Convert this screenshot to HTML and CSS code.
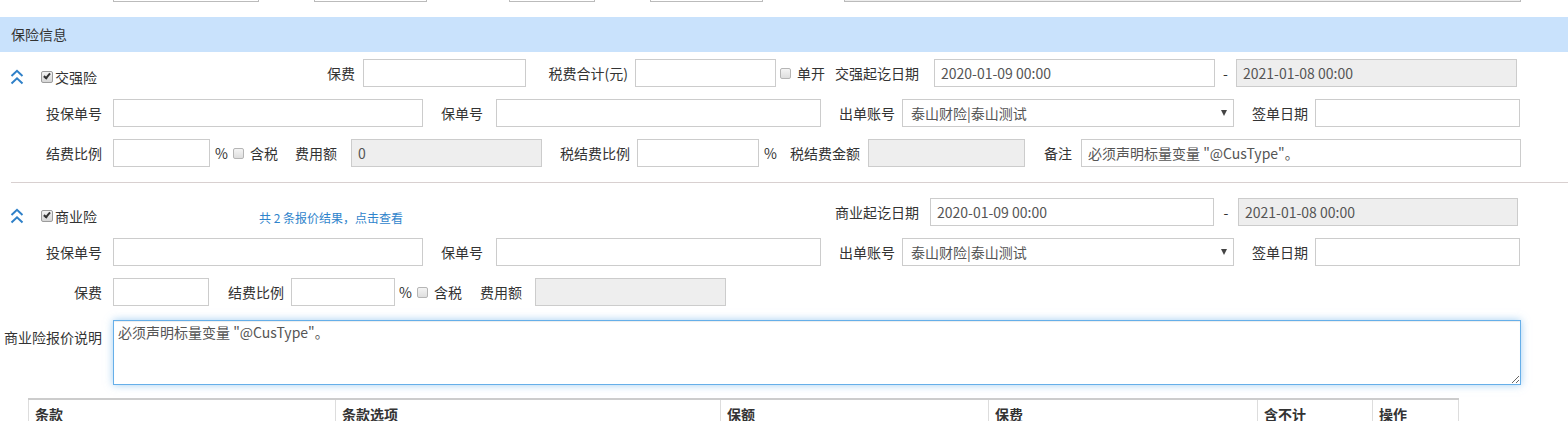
FILE: index.html
```html
<!DOCTYPE html>
<html lang="zh-CN">
<head>
<meta charset="UTF-8">
<meta name="viewport" content="width=device-width, initial-scale=1.0">
<title>保险信息</title>
<link rel="stylesheet" href="styles.css">
</head>
<body>
    <!-- tail of the block above -->
    <div class="prev_row">
        <input type="text" class="prev_a">
        <input type="text" class="prev_b">
        <input type="text" class="prev_c">
        <input type="text" class="prev_d">
        <input type="text" class="prev_e" disabled>
    </div>

    <div class="panel_title">保险信息</div>

    <div class="ins_block">
        <!-- 交强险 -->
        <div class="form_row">
            <div class="ins_head w300">
                <svg class="fold" width="14" height="16" viewBox="0 0 14 16"><polyline points="1.5,7 7,1.8 12.5,7" /><polyline points="1.5,14.5 7,9.3 12.5,14.5" /></svg>
                <label class="chk"><input type="checkbox" checked>交强险</label>
            </div>
            <label class="lbl w63 pr8">保费</label>
            <input type="text" class="txt w163">
            <label class="lbl w109 pr7">税费合计(元)</label>
            <input type="text" class="txt w141">
            <span class="unit_group w59 pl4"><label class="chk light"><input type="checkbox">单开</label></span>
            <label class="lbl w99 pr16">交强起讫日期</label>
            <input type="text" class="txt w281" value="2020-01-09 00:00">
            <span class="dash w21">-</span>
            <input type="text" class="txt w281" value="2021-01-08 00:00" disabled>
        </div>
        <div class="form_row">
            <label class="lbl w113 pr11">投保单号</label>
            <input type="text" class="txt w310">
            <label class="lbl w73 pr13">保单号</label>
            <input type="text" class="txt w325">
            <label class="lbl w81 pr7">出单账号</label>
            <span class="sel w332"><select><option>泰山财险|泰山测试</option></select></span>
            <label class="lbl w81 pr7">签单日期</label>
            <input type="text" class="txt w205">
        </div>
        <div class="form_row">
            <label class="lbl w113 pr11">结费比例</label>
            <input type="text" class="txt w97">
            <span class="unit_group w66 pl5">%<label class="chk light gap"><input type="checkbox">含税</label></span>
            <label class="lbl w75 pr14">费用额</label>
            <input type="text" class="txt w191" value="0" disabled>
            <label class="lbl w95 pr7">税结费比例</label>
            <input type="text" class="txt w122">
            <span class="unit_group w17 pl5">%</span>
            <label class="lbl w92 pr8">税结费金额</label>
            <input type="text" class="txt w157" disabled>
            <label class="lbl w56 pr9">备注</label>
            <input type="text" class="txt w440" value="必须声明标量变量 &quot;@CusType&quot;。">
        </div>

        <div class="divider"></div>

        <!-- 商业险 -->
        <div class="form_row">
            <div class="ins_head w259">
                <svg class="fold" width="14" height="16" viewBox="0 0 14 16"><polyline points="1.5,7 7,1.8 12.5,7" /><polyline points="1.5,14.5 7,9.3 12.5,14.5" /></svg>
                <label class="chk"><input type="checkbox" checked>商业险</label>
            </div>
            <a class="quote_link w576" href="#">共 2 条报价结果，点击查看</a>
            <label class="lbl lbl_l w95">商业起讫日期</label>
            <input type="text" class="txt w284" value="2020-01-09 00:00">
            <span class="dash w24">-</span>
            <input type="text" class="txt w280" value="2021-01-08 00:00" disabled>
        </div>
        <div class="form_row">
            <label class="lbl w113 pr11">投保单号</label>
            <input type="text" class="txt w310">
            <label class="lbl w73 pr13">保单号</label>
            <input type="text" class="txt w325">
            <label class="lbl w81 pr7">出单账号</label>
            <span class="sel w332"><select><option>泰山财险|泰山测试</option></select></span>
            <label class="lbl w81 pr7">签单日期</label>
            <input type="text" class="txt w205">
        </div>
        <div class="form_row row_last">
            <label class="lbl w113 pr11">保费</label>
            <input type="text" class="txt w96">
            <label class="lbl w82 pr7">结费比例</label>
            <input type="text" class="txt w104">
            <span class="unit_group w65 pl4">%<label class="chk light gap"><input type="checkbox">含税</label></span>
            <label class="lbl w75 pr13">费用额</label>
            <input type="text" class="txt w191" disabled>
        </div>
        <div class="form_row row_area">
            <label class="lbl w113 pr11">商业险报价说明</label>
            <textarea class="memo">必须声明标量变量 "@CusType"。</textarea>
        </div>

        <table class="clause_table">
            <colgroup>
                <col class="c1"><col class="c2"><col class="c3"><col class="c4"><col class="c5"><col class="c6">
            </colgroup>
            <thead>
                <tr>
                    <th>条款</th>
                    <th>条款选项</th>
                    <th>保额</th>
                    <th>保费</th>
                    <th>含不计</th>
                    <th>操作</th>
                </tr>
            </thead>
        </table>
    </div>
</body>
</html>
```

FILE: styles.css
```css
*,
*::before,
*::after {
  box-sizing: border-box;
}
body {
    margin: 0;
    font-family: "Noto Sans CJK SC", sans-serif;
    font-size: 14px;
    color: #333;
    background: #fff;
}
input,
select,
textarea {
    font-family: inherit;
    font-size: 14px;
    color: #555;
}

/* bottom edge of the previous block */
.prev_row {
    display: flex;
    align-items: flex-end;
    height: 2px;
    overflow: hidden;
}
.prev_row input {
    flex: none;
    height: 28px;
    border: 1px solid #bbb;
    background: #fff;
}
.prev_row input[disabled] {
    background: #eee;
}
.prev_a { margin-left: 113px; width: 146px; }
.prev_b { margin-left: 55px; width: 113px; }
.prev_c { margin-left: 82px; width: 86px; }
.prev_d { margin-left: 55px; width: 113px; }
.prev_e { margin-left: 81px; width: 677px; }

.panel_title {
    margin-top: 15px;
    height: 35px;
    line-height: 35px;
    padding-left: 11px;
    background: #c9e2fc;
}

.ins_block {
    padding-top: 7px;
}
.form_row {
    display: flex;
    align-items: center;
    height: 28px;
    margin-bottom: 12px;
}
.row_last {
    margin-bottom: 14px;
}
.row_area {
    align-items: flex-start;
    height: auto;
    margin-bottom: 13px;
}
.row_area .lbl {
    padding-top: 7px;
}

.ins_head {
    flex: none;
    display: flex;
    align-items: center;
    align-self: stretch;
    padding: 8px 0 0 10px;
}
.fold {
    flex: none;
    fill: none;
    stroke: #2f80c8;
    stroke-width: 2;
}
.ins_head .chk {
    margin-left: 17px;
}

.lbl {
    flex: none;
    text-align: right;
    line-height: 20px;
    white-space: nowrap;
}
.lbl_l {
    text-align: left;
}
.txt {
    flex: none;
    height: 28px;
    padding: 0 6px;
    border: 1px solid #ccc;
    background: #fff;
    outline: none;
}
.txt[disabled] {
    background: #eee;
}
.dash {
    flex: none;
    text-align: center;
}

.sel {
    flex: none;
    position: relative;
    height: 28px;
}
.sel select {
    -webkit-appearance: none;
    appearance: none;
    width: 100%;
    height: 28px;
    padding: 0 8px;
    border: 1px solid #ccc;
    border-radius: 0;
    background: #fff;
    outline: none;
}
.sel::after {
    content: "";
    position: absolute;
    right: 7px;
    top: 11px;
    border-left: 3.5px solid transparent;
    border-right: 3.5px solid transparent;
    border-top: 6px solid #444;
}

/* old-style gray checkboxes */
.chk {
    display: inline-flex;
    align-items: center;
    white-space: nowrap;
}
.chk input {
    -webkit-appearance: none;
    appearance: none;
    position: relative;
    width: 12px;
    height: 12px;
    margin: 0 2px 0 0;
    border: 1px solid #9c9c9c;
    border-radius: 2px;
    background: linear-gradient(#f3f3f3, #d6d6d6);
}
.chk input:checked::after {
    content: "";
    position: absolute;
    left: 3px;
    top: 0;
    width: 4px;
    height: 7px;
    border-right: 2px solid #333;
    border-bottom: 2px solid #333;
    transform: rotate(40deg);
}
.chk.light input {
    width: 11px;
    height: 11px;
    margin-right: 6px;
    border-color: #b5b5b5;
    background: linear-gradient(#f4f4f4, #dedede);
}
.chk.gap {
    margin-left: 5px;
}

.unit_group {
    flex: none;
    display: flex;
    align-items: center;
    white-space: nowrap;
}

.quote_link {
    flex: none;
    align-self: flex-end;
    line-height: 16px;
    font-size: 12px;
    color: #2f84cc;
    text-decoration: none;
}

.memo {
    flex: none;
    width: 1408px;
    height: 65px;
    padding: 1px 4px;
    line-height: 20px;
    border: 1px solid #66afe9;
    outline: none;
    box-shadow: inset 0 1px 1px rgba(0, 0, 0, .075), 0 0 8px rgba(102, 175, 233, .6);
}

.divider {
    height: 1px;
    margin: 15px 0 15px 11px;
    background: #d8d0d0;
}

.clause_table {
    margin-left: 28px;
    width: 1430px;
    border-collapse: collapse;
    table-layout: fixed;
    border-top: 2px solid #ccc;
}
.clause_table th {
    padding: 4px 6px 8px;
    line-height: 20px;
    text-align: left;
    font-weight: bold;
    color: #333;
    border-left: 1px solid #ddd;
    border-right: 1px solid #ddd;
}
.c1 { width: 307px; }
.c2 { width: 385px; }
.c3 { width: 268px; }
.c4 { width: 269px; }
.c5 { width: 115px; }
.c6 { width: 86px; }

/* widths */
.w17 { width: 17px; }
.w21 { width: 21px; }
.w24 { width: 24px; }
.w56 { width: 56px; }
.w59 { width: 59px; }
.w63 { width: 63px; }
.w65 { width: 65px; }
.w66 { width: 66px; }
.w73 { width: 73px; }
.w75 { width: 75px; }
.w81 { width: 81px; }
.w82 { width: 82px; }
.w92 { width: 92px; }
.w95 { width: 95px; }
.w96 { width: 96px; }
.w97 { width: 97px; }
.w99 { width: 99px; }
.w104 { width: 104px; }
.w109 { width: 109px; }
.w113 { width: 113px; }
.w122 { width: 122px; }
.w141 { width: 141px; }
.w157 { width: 157px; }
.w163 { width: 163px; }
.w191 { width: 191px; }
.w205 { width: 205px; }
.w259 { width: 259px; }
.w280 { width: 280px; }
.w281 { width: 281px; }
.w284 { width: 284px; }
.w300 { width: 300px; }
.w310 { width: 310px; }
.w325 { width: 325px; }
.w332 { width: 332px; }
.w440 { width: 440px; }
.w576 { width: 576px; }

.pr7 { padding-right: 7px; }
.pr8 { padding-right: 8px; }
.pr9 { padding-right: 9px; }
.pr11 { padding-right: 11px; }
.pr13 { padding-right: 13px; }
.pr14 { padding-right: 14px; }
.pr16 { padding-right: 16px; }
.pl4 { padding-left: 4px; }
.pl5 { padding-left: 5px; }
```
